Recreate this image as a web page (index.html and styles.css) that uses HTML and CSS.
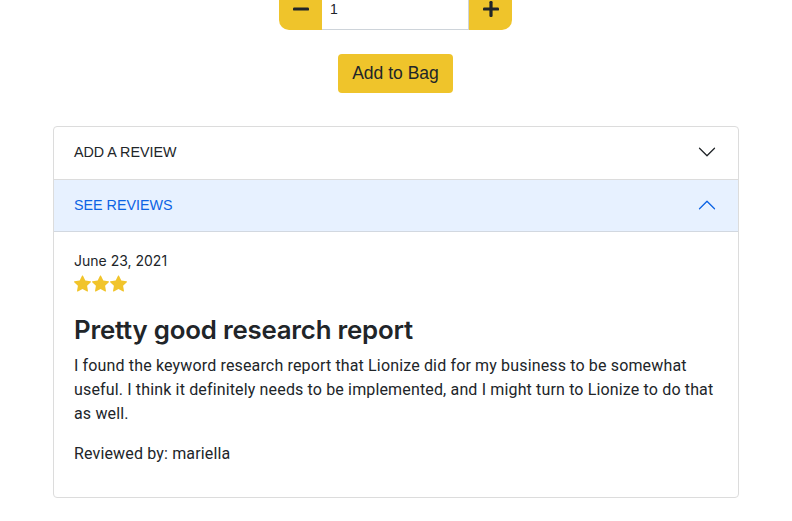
FILE: index.html
```html
<!DOCTYPE html>
<html>
<head>
<meta charset="utf-8">
<link rel="stylesheet" href="styles.css">
</head>
<body>
<div class="page">
  <div class="qty">
    <button class="qty-btn qty-minus" aria-label="decrease">
      <svg width="16" height="16" viewBox="0 0 16 16"><rect x="0" y="6.4" width="16" height="3.2" rx="1.2" fill="#212529"/></svg>
    </button>
    <div class="qty-input">1</div>
    <button class="qty-btn qty-plus" aria-label="increase">
      <svg width="16" height="16" viewBox="0 0 16 16"><rect x="0" y="6.4" width="16" height="3.2" rx="1.2" fill="#212529"/><rect x="6.4" y="0" width="3.2" height="16" rx="1.2" fill="#212529"/></svg>
    </button>
  </div>
  <div class="bag-row"><button class="bag-btn">Add to Bag</button></div>

  <div class="accordion">
    <div class="acc-item">
      <div class="acc-head">
        <span>ADD A REVIEW</span>
        <svg class="chev" width="20" height="20" viewBox="0 0 16 16"><path fill="#212529" fill-rule="evenodd" d="M1.646 4.646a.5.5 0 0 1 .708 0L8 10.293l5.646-5.647a.5.5 0 0 1 .708.708l-6 6a.5.5 0 0 1-.708 0l-6-6a.5.5 0 0 1 0-.708z"/></svg>
      </div>
    </div>
    <div class="acc-item">
      <div class="acc-head active">
        <span>SEE REVIEWS</span>
        <svg class="chev" width="20" height="20" viewBox="0 0 16 16"><path fill="#0c63e4" fill-rule="evenodd" d="M1.646 11.354a.5.5 0 0 0 .708 0L8 5.707l5.646 5.647a.5.5 0 0 0 .708-.708l-6-6a.5.5 0 0 0-.708 0l-6 6a.5.5 0 0 0 0 .708z"/></svg>
      </div>
      <div class="acc-body">
        <div class="date">June 23, 2021</div>
        <div class="stars">
          <svg width="17" height="17" viewBox="0 0 16 16"><path fill="#f1c42b" d="M3.612 15.443c-.386.198-.824-.149-.746-.592l.83-4.73L.173 6.765c-.329-.314-.158-.888.283-.95l4.898-.696L7.538.792c.197-.39.73-.39.927 0l2.184 4.327 4.898.696c.441.062.612.636.282.95l-3.522 3.356.83 4.73c.078.443-.36.79-.746.592L8 13.187l-4.389 2.256z"/></svg>
          <svg width="17" height="17" viewBox="0 0 16 16"><path fill="#f1c42b" d="M3.612 15.443c-.386.198-.824-.149-.746-.592l.83-4.73L.173 6.765c-.329-.314-.158-.888.283-.95l4.898-.696L7.538.792c.197-.39.73-.39.927 0l2.184 4.327 4.898.696c.441.062.612.636.282.95l-3.522 3.356.83 4.73c.078.443-.36.79-.746.592L8 13.187l-4.389 2.256z"/></svg>
          <svg width="17" height="17" viewBox="0 0 16 16"><path fill="#f1c42b" d="M3.612 15.443c-.386.198-.824-.149-.746-.592l.83-4.73L.173 6.765c-.329-.314-.158-.888.283-.95l4.898-.696L7.538.792c.197-.39.73-.39.927 0l2.184 4.327 4.898.696c.441.062.612.636.282.95l-3.522 3.356.83 4.73c.078.443-.36.79-.746.592L8 13.187l-4.389 2.256z"/></svg>
        </div>
        <h3 class="title">Pretty good research report</h3>
        <p class="text">I found the keyword research report that Lionize did for my business to be somewhat useful. I think it definitely needs to be implemented, and I might turn to Lionize to do that as well.</p>
        <p class="by">Reviewed by: mariella</p>
      </div>
    </div>
  </div>
</div>
</body>
</html>
```
FILE: styles.css
```css
* { box-sizing: border-box; }
html, body { margin: 0; padding: 0; background: #fff; }
body { font-family: Roboto, "Liberation Sans", sans-serif; color: #212529; }
.page { width: 686px; margin: 0 auto; }

.qty { display: flex; justify-content: center; margin-top: -9px; height: 39px; padding-right: 1px; }
.qty-btn { width: 43px; height: 39px; border: 0; background: #efc42b; display: flex; align-items: center; justify-content: center; padding: 0 0 3px; }
.qty-minus { border-radius: 10px 0 0 10px; }
.qty-plus { border-radius: 0 10px 10px 0; }
.qty-input { width: 147px; height: 39px; border: 1px solid #ced4da; border-left: 0; background: #fff; font-family: "Liberation Sans", Arial, sans-serif; font-size: 14px; padding: 9px 0 0 8px; color: #212529; }

.bag-row { display: flex; justify-content: center; margin-top: 24px; padding-right: 1px; }
.bag-btn { background: #efc42b; border: 0; border-radius: 4px; height: 39px; padding: 0 14px; font-family: "Liberation Sans", Arial, sans-serif; font-size: 17.5px; color: #212529; width: 115px; }

.accordion { margin-top: 33px; border: 1px solid #dcdcdc; border-radius: 4px; overflow: hidden; }
.acc-head { height: 52px; display: flex; align-items: center; justify-content: space-between; padding: 0 20px 2px; font-family: "Liberation Sans", Arial, sans-serif; font-size: 14.3px; color: #212529; }
.acc-item + .acc-item { border-top: 1px solid #dcdcdc; }
.acc-head.active { background: #e7f1ff; color: #0c63e4; border-bottom: 1px solid #d2d8e0; }
.chev { margin-right: 1px; }

.acc-body { padding: 20px 20px 31px; }
.date { font-family: Inter, "Liberation Sans", sans-serif; font-size: 14px; line-height: 18px; }
.stars { display: flex; gap: 1px; margin-top: 3px; height: 20px; align-items: center; }
.title { font-family: Inter, "Liberation Sans", sans-serif; font-weight: 600; font-size: 25.8px; margin: 21px 0 8px; line-height: 32px; letter-spacing: -0.2px; }
.text { font-size: 16px; line-height: 24px; margin: 0 0 16px; letter-spacing: 0.15px; }
.by { font-size: 16px; line-height: 24px; margin: 0; letter-spacing: 0.15px; }
```
